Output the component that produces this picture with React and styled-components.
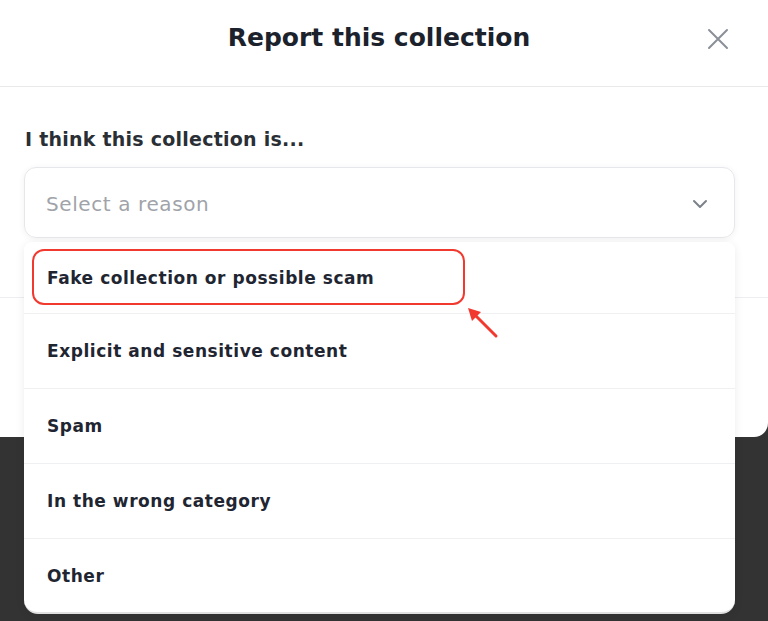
import React from 'react';
import styled, { createGlobalStyle } from 'styled-components';

const GlobalStyle = createGlobalStyle`
  html, body {
    margin: 0;
    padding: 0;
    background: #333333;
  }
  body {
    font-family: "DejaVu Sans", "Noto Sans", sans-serif;
    color: #1d2430;
  }
`;

const Page = styled.div`
  position: relative;
  width: 768px;
  height: 621px;
  overflow: hidden;
  background: #333333;
`;

const Modal = styled.div`
  height: 437px;
  background: #ffffff;
  border-radius: 0 0 14px 0;
  display: flex;
  flex-direction: column;
`;

const Header = styled.div`
  height: 87px;
  box-sizing: border-box;
  border-bottom: 1px solid #e9e9ec;
  display: flex;
  align-items: center;
  justify-content: center;
  position: relative;
`;

const Title = styled.h2`
  margin: 0 10px 12px 0;
  font-size: 25px;
  font-weight: 700;
  color: #1b222c;
`;

const CloseButton = styled.button`
  position: absolute;
  right: 38px;
  top: 27px;
  width: 24px;
  height: 24px;
  padding: 0;
  border: none;
  background: none;
  display: flex;
  align-items: center;
  justify-content: center;
  svg {
    stroke: #8a8f98;
  }
`;

const Body = styled.div`
  padding: 41px 33px 0 24px;
  display: flex;
  flex-direction: column;
`;

const Label = styled.div`
  font-size: 19px;
  font-weight: 700;
  letter-spacing: 0.24px;
  color: #2a2f36;
  margin-left: 1px;
  margin-bottom: 17px;
`;

const Select = styled.div`
  height: 71px;
  box-sizing: border-box;
  border: 1px solid #e6e7ea;
  border-radius: 12px;
  box-shadow: 0 1px 6px rgba(0, 0, 0, 0.06);
  display: flex;
  align-items: center;
  justify-content: space-between;
  padding: 2px 26px 0 21px;
`;

const Placeholder = styled.span`
  font-size: 20px;
  letter-spacing: 0.6px;
  color: #a0a3a9;
`;

const Footer = styled.div`
  margin-top: 59px;
  border-top: 1px solid #eceef1;
  flex: 1;
`;

const Menu = styled.ul`
  position: absolute;
  top: 242px;
  left: 24px;
  width: 711px;
  margin: 0;
  padding: 0;
  list-style: none;
  background: #ffffff;
  border-radius: 8px 8px 14px 14px;
  box-shadow: 0 2px 10px rgba(0, 0, 0, 0.08);
  border-bottom: 2px solid #e0e0e0;
`;

const Item = styled.li`
  position: relative;
  height: ${(p) => p.$height}px;
  box-sizing: border-box;
  display: flex;
  align-items: center;
  padding-left: 23px;
  font-size: 17px;
  font-weight: 700;
  letter-spacing: 0.55px;
  color: #1f2632;
  border-top: ${(p) => (p.$first ? 'none' : '1px solid #eef0f2')};
`;

const Highlight = styled.span`
  position: absolute;
  left: 8px;
  top: 7px;
  width: 433px;
  height: 56px;
  box-sizing: border-box;
  border: 2.5px solid #f2392f;
  border-radius: 12px;
`;

const Arrow = styled.svg`
  position: absolute;
  left: 462px;
  top: 303px;
`;

const reasons = [
  'Fake collection or possible scam',
  'Explicit and sensitive content',
  'Spam',
  'In the wrong category',
  'Other',
];

export default function App() {
  return (
    <>
      <GlobalStyle />
      <Page>
        <Modal>
          <Header>
            <Title>Report this collection</Title>
            <CloseButton aria-label="Close">
              <svg width="22" height="22" viewBox="0 0 22 22" fill="none" strokeWidth="2" strokeLinecap="round">
                <path d="M2 2L20 20M20 2L2 20" />
              </svg>
            </CloseButton>
          </Header>
          <Body>
            <Label>I think this collection is...</Label>
            <Select>
              <Placeholder>Select a reason</Placeholder>
              <svg width="16" height="10" viewBox="0 0 16 10" fill="none" stroke="#7d828a" strokeWidth="2" strokeLinecap="round" strokeLinejoin="round">
                <path d="M2 2L8 8L14 2" />
              </svg>
            </Select>
          </Body>
          <Footer />
        </Modal>
        <Menu>
          {reasons.map((r, i) => (
            <Item
              key={r}
              $first={i === 0}
              $height={i === 0 ? 71 : i === reasons.length - 1 ? 74 : 75}
            >
              {i === 0 && <Highlight />}
              {r}
            </Item>
          ))}
        </Menu>
        <Arrow width="40" height="40" viewBox="0 0 40 40" fill="none">
          <path d="M34 33L10 9" stroke="#f2392f" strokeWidth="3" strokeLinecap="round" />
          <path d="M6 5L19 9L10 18Z" fill="#f2392f" />
        </Arrow>
      </Page>
    </>
  );
}
